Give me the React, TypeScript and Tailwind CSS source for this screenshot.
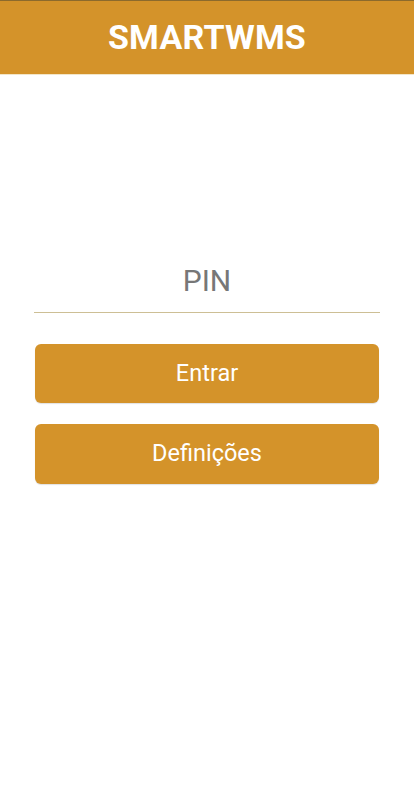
import React from "react";

const ActionButton = ({ label, className }: { label: string; className: string }) => (
  <button
    type="button"
    className={`${className} w-full rounded-[6px] bg-[#d4932a] text-[23.5px] text-white shadow-[0_1px_1px_rgba(0,0,0,0.12)]`}
  >
    {label}
  </button>
);

export default function App() {
  return (
    <div
      className="min-h-[800px] bg-white"
      style={{ fontFamily: "Roboto, 'Liberation Sans', sans-serif" }}
    >
      <header className="flex h-[74px] items-center justify-center border-t border-[#8c6a2c] bg-[#d4932a] shadow-[0_1px_0_#f3e6c8]">
        <h1 className="text-[34px] font-bold tracking-[0.2px] text-white">SMARTWMS</h1>
      </header>

      <main className="px-[34px]">
        <div className="mt-[188px] flex h-[51px] items-center justify-center border-b border-[#cdbf95] pb-[14px]">
          <input
            type="password"
            placeholder="PIN"
            className="w-full bg-transparent text-center text-[30px] text-[#777777] outline-none placeholder:text-[#777777]"
          />
        </div>

        <div className="mx-px mt-[31px] flex flex-col gap-[21px]">
          <ActionButton label="Entrar" className="h-[59px]" />
          <ActionButton label="Definições" className="h-[60px]" />
        </div>
      </main>
    </div>
  );
}
